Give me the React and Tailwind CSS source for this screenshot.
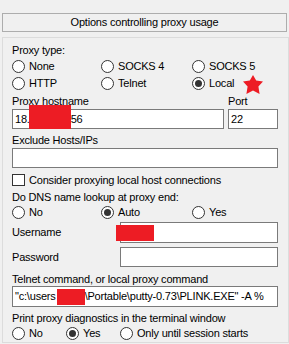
import React from "react";

// radio button in the old Windows style
const Radio = ({ label, checked, className = "" }) => (
  <div className={`flex items-center gap-[4px] ${className}`}>
    <span className="flex h-[13px] w-[13px] shrink-0 items-center justify-center rounded-full border border-[#333] bg-white">
      {checked && <span className="h-[7px] w-[7px] rounded-full bg-[#333]" />}
    </span>
    <span className="leading-none">{label}</span>
  </div>
);

const Box = ({ className = "", children }) => (
  <div className={`flex items-center border border-[#7a7a7a] bg-white pl-[2px] leading-none overflow-hidden whitespace-nowrap ${className}`}>
    {children}
  </div>
);

const Label = ({ children, className = "" }) => (
  <div className={`flex h-[14px] items-center leading-none ${className}`}>{children}</div>
);

export default function App() {
  return (
    <div
      className="relative h-[344px] w-[289px] overflow-hidden bg-[#f0f0f0] text-[11px] tracking-[-0.2px] text-black"
      style={{ fontFamily: '"Liberation Sans", Arial, sans-serif' }}
    >
      <div className="mx-[2px] mt-[13px] flex h-[19px] items-center justify-center border border-[#adadad] bg-[#f0f0f0] leading-none">
        Options controlling proxy usage
      </div>

      <div className="ml-[2px] mt-[5px] box-border flex h-[306px] w-[287px] flex-col border border-[#dcdcdc] pl-[9px] pr-[9px]">
        <Label className="mt-[5px] h-[15px]">Proxy type:</Label>
        <div className="mt-[1px] flex h-[14px]">
          <Radio label="None" className="w-[89px]" />
          <Radio label="SOCKS 4" className="w-[91px]" />
          <Radio label="SOCKS 5" />
        </div>
        <div className="mt-[3px] flex h-[14px]">
          <Radio label="HTTP" className="w-[89px]" />
          <Radio label="Telnet" className="w-[91px]" />
          <Radio label="Local" checked />
        </div>

        <div className="mt-[4px] flex h-[14px]">
          <Label className="w-[216px]">Proxy hostname</Label>
          <Label>Port</Label>
        </div>
        <div className="mt-[1px] flex h-[20px] gap-[4px]">
          <Box className="w-[212px]">
            <span>18.</span>
            <span className="w-[41px]" />
            <span>56</span>
          </Box>
          <Box className="w-[50px]">22</Box>
        </div>

        <Label className="mt-[4px]">Exclude Hosts/IPs</Label>
        <Box className="mt-[1px] h-[20px] w-[266px]" />

        <div className="mt-[5px] flex h-[14px] items-center gap-[4px]">
          <span className="h-[12px] w-[13px] border border-[#333] bg-white" />
          <span className="leading-none">Consider proxying local host connections</span>
        </div>

        <Label className="mt-[3px]">Do DNS name lookup at proxy end:</Label>
        <div className="mt-[1px] flex h-[14px]">
          <Radio label="No" className="w-[89px]" />
          <Radio label="Auto" checked className="w-[91px]" />
          <Radio label="Yes" />
        </div>

        <div className="mt-[3px] flex h-[21px] items-center">
          <span className="w-[108px] leading-none">Username</span>
          <Box className="h-[21px] w-[158px]" />
        </div>
        <div className="mt-[4px] flex h-[20px] items-center">
          <span className="w-[108px] leading-none">Password</span>
          <Box className="h-[20px] w-[158px]" />
        </div>

        <Label className="mt-[5px] h-[13px]">Telnet command, or local proxy command</Label>
        <Box className="h-[21px] w-[266px]">
          <span>"c:\users</span>
          <span className="ml-[1px] inline-block h-[16px] w-[28px] shrink-0 bg-[#ed1c24]" />
          <span>\Portable\putty-0.73\PLINK.EXE" -A %</span>
        </Box>

        <Label className="mt-[4px]">Print proxy diagnostics in the terminal window</Label>
        <div className="mt-[1px] flex h-[14px]">
          <Radio label="No" className="w-[54px]" />
          <Radio label="Yes" checked className="w-[54px]" />
          <Radio label="Only until session starts" />
        </div>
      </div>

      {/* redaction blocks and marker drawn over the form */}
      <div className="absolute left-[29px] top-[105px] h-[24px] w-[42px] bg-[#ed1c24]" />
      <div className="absolute left-[116px] top-[225px] h-[16px] w-[38px] bg-[#ed1c24]" />
      <svg className="absolute left-[243px] top-[75px]" width="20" height="19" viewBox="0 0 20 19">
        <polygon
          points="10,0 13.2,5.6 20,6.6 15.4,11.6 16.6,19 10,15.6 3.4,19 4.6,11.6 0,6.6 6.8,5.6"
          fill="#ed1c24"
        />
      </svg>
    </div>
  );
}
